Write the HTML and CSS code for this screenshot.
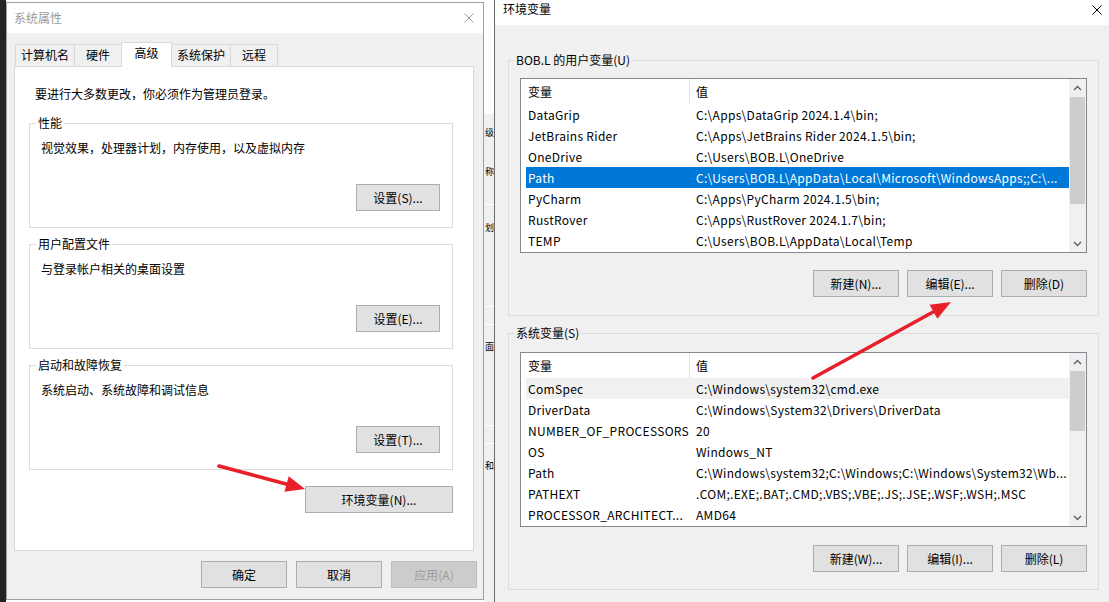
FILE: index.html
```html
<!DOCTYPE html>
<html lang="zh-CN">

<head>
    <meta charset="UTF-8">
    <meta name="viewport" content="width=device-width, initial-scale=1.0">
    <title>环境变量</title>
    <link rel="stylesheet" href="styles.css">
</head>

<body>

    <div class="desk-edge"></div>

    <!-- 系统属性 窗口 -->
    <div class="backdrop">
        <div class="window sysprop">
            <div class="titlebar">
                <span>系统属性</span>
                <svg class="close" width="10" height="10" viewBox="0 0 10 10">
                    <path d="M0.5 0.5 L9.5 9.5 M9.5 0.5 L0.5 9.5" />
                </svg>
            </div>
            <div class="content">
                <div class="tabs">
                    <div class="tab">计算机名</div>
                    <div class="tab">硬件</div>
                    <div class="tab active">高级</div>
                    <div class="tab">系统保护</div>
                    <div class="tab">远程</div>
                </div>
                <div class="panel">
                    <p class="notice">要进行大多数更改，你必须作为管理员登录。</p>

                    <fieldset class="group">
                        <legend>性能</legend>
                        <p>视觉效果，处理器计划，内存使用，以及虚拟内存</p>
                        <div class="btn-row">
                            <button class="btn btn-set">设置(S)...</button>
                        </div>
                    </fieldset>

                    <fieldset class="group">
                        <legend>用户配置文件</legend>
                        <p>与登录帐户相关的桌面设置</p>
                        <div class="btn-row">
                            <button class="btn btn-set">设置(E)...</button>
                        </div>
                    </fieldset>

                    <fieldset class="group">
                        <legend>启动和故障恢复</legend>
                        <p>系统启动、系统故障和调试信息</p>
                        <div class="btn-row">
                            <button class="btn btn-set">设置(T)...</button>
                        </div>
                    </fieldset>

                    <div class="btn-row env-row">
                        <button class="btn btn-env">环境变量(N)...</button>
                    </div>
                </div>
                <div class="dialog-buttons">
                    <button class="btn">确定</button>
                    <button class="btn">取消</button>
                    <button class="btn" disabled>应用(A)</button>
                </div>
            </div>
        </div>
    </div>

    <!-- 后面窗口露出的一条 -->
    <div class="behind">
        <div class="behind-top"></div>
        <div class="peek peek-1">级</div>
        <div class="peek peek-2">称</div>
        <div class="rule rule-1"></div>
        <div class="peek peek-3">划</div>
        <div class="rule rule-2"></div>
        <div class="rule rule-3"></div>
        <div class="peek peek-4">面</div>
        <div class="rule rule-2"></div>
        <div class="rule rule-3"></div>
        <div class="peek peek-5">和</div>
    </div>

    <!-- 环境变量 窗口 -->
    <div class="window envvars">
        <div class="titlebar">
            <span>环境变量</span>
            <svg class="close" width="10" height="10" viewBox="0 0 10 10">
                <path d="M0.5 0.5 L9.5 9.5 M9.5 0.5 L0.5 9.5" />
            </svg>
        </div>
        <div class="env-body">
            <fieldset class="env-group user-group">
                <legend>BOB.L 的用户变量(U)</legend>
                <div class="listview">
                    <div class="list-main">
                        <div class="list-head">
                            <div class="col-name">变量</div>
                            <div class="col-value">值</div>
                        </div>
                        <div class="row"><span>DataGrip</span><span>C:\Apps\DataGrip 2024.1.4\bin;</span></div>
                        <div class="row"><span>JetBrains Rider</span><span>C:\Apps\JetBrains Rider 2024.1.5\bin;</span></div>
                        <div class="row"><span>OneDrive</span><span>C:\Users\BOB.L\OneDrive</span></div>
                        <div class="row selected"><span>Path</span><span>C:\Users\BOB.L\AppData\Local\Microsoft\WindowsApps;;C:\...</span></div>
                        <div class="row"><span>PyCharm</span><span>C:\Apps\PyCharm 2024.1.5\bin;</span></div>
                        <div class="row"><span>RustRover</span><span>C:\Apps\RustRover 2024.1.7\bin;</span></div>
                        <div class="row"><span>TEMP</span><span>C:\Users\BOB.L\AppData\Local\Temp</span></div>
                    </div>
                    <div class="vscroll">
                        <div class="arrow">
                            <svg width="9" height="6" viewBox="0 0 9 6"><polyline points="1,5 4.5,1.5 8,5" /></svg>
                        </div>
                        <div class="track"><div class="thumb thumb-user"></div></div>
                        <div class="arrow">
                            <svg width="9" height="6" viewBox="0 0 9 6"><polyline points="1,1 4.5,4.5 8,1" /></svg>
                        </div>
                    </div>
                </div>
                <div class="btn-row list-buttons">
                    <button class="btn btn-list">新建(N)...</button>
                    <button class="btn btn-list">编辑(E)...</button>
                    <button class="btn btn-list">删除(D)</button>
                </div>
            </fieldset>

            <fieldset class="env-group system-group">
                <legend>系统变量(S)</legend>
                <div class="listview">
                    <div class="list-main">
                        <div class="list-head">
                            <div class="col-name">变量</div>
                            <div class="col-value">值</div>
                        </div>
                        <div class="row hover"><span>ComSpec</span><span>C:\Windows\system32\cmd.exe</span></div>
                        <div class="row"><span>DriverData</span><span>C:\Windows\System32\Drivers\DriverData</span></div>
                        <div class="row"><span>NUMBER_OF_PROCESSORS</span><span>20</span></div>
                        <div class="row"><span>OS</span><span>Windows_NT</span></div>
                        <div class="row"><span>Path</span><span>C:\Windows\system32;C:\Windows;C:\Windows\System32\Wb...</span></div>
                        <div class="row"><span>PATHEXT</span><span>.COM;.EXE;.BAT;.CMD;.VBS;.VBE;.JS;.JSE;.WSF;.WSH;.MSC</span></div>
                        <div class="row"><span>PROCESSOR_ARCHITECT...</span><span>AMD64</span></div>
                    </div>
                    <div class="vscroll">
                        <div class="arrow">
                            <svg width="9" height="6" viewBox="0 0 9 6"><polyline points="1,5 4.5,1.5 8,5" /></svg>
                        </div>
                        <div class="track"><div class="thumb thumb-system"></div></div>
                        <div class="arrow">
                            <svg width="9" height="6" viewBox="0 0 9 6"><polyline points="1,1 4.5,4.5 8,1" /></svg>
                        </div>
                    </div>
                </div>
                <div class="btn-row list-buttons">
                    <button class="btn btn-list">新建(W)...</button>
                    <button class="btn btn-list">编辑(I)...</button>
                    <button class="btn btn-list">删除(L)</button>
                </div>
            </fieldset>
        </div>
    </div>

    <!-- 红色标注箭头 -->
    <svg class="marks" width="1109" height="602" viewBox="0 0 1109 602">
        <line x1="219" y1="466" x2="288" y2="484.5" />
        <polygon points="305,489 284.5,491.8 288.7,476.3" />
        <line x1="813" y1="378" x2="934" y2="311.5" />
        <polygon points="951,302 937.4,318.7 929.6,304.7" />
    </svg>

</body>

</html>
```

FILE: styles.css
```css
/* 基本设置 */
* {
    box-sizing: border-box;
}

body {
    margin: 0;
    width: 1109px;
    height: 602px;
    overflow: hidden;
    position: relative;
    display: flex;
    background-color: #1e1e1e;
    font-family: "Noto Sans CJK SC", sans-serif;
    font-size: 12px;
    line-height: 16px;
    color: #000;
}

p {
    margin: 0;
}

.desk-edge {
    width: 6px;
    flex-shrink: 0;
    background-color: #242424;
}

.backdrop {
    width: 478px;
    flex-shrink: 0;
    padding-top: 2px;
    background-color: #fff;
}

/* 窗口 */
.window {
    background-color: #f0f0f0;
    border: 1px solid #a0a0a0;
}

.titlebar {
    display: flex;
    justify-content: space-between;
    background-color: #fff;
}

.close path {
    fill: none;
    stroke: #000;
    stroke-width: 1;
}

.sysprop {
    height: 598px;
}

.sysprop .titlebar {
    height: 30px;
    align-items: center;
    padding: 0 9px 0 7px;
    color: #9a9a9a;
}

.sysprop .close path {
    stroke: #9a9a9a;
}

.sysprop .content {
    padding: 9px 6px 0 7px;
}

/* 标签页 */
.tabs {
    display: flex;
    align-items: flex-end;
    height: 24px;
    padding-left: 1px;
}

.tab {
    height: 22px;
    min-width: 48px;
    padding: 0 5px;
    margin-right: -1px;
    border: 1px solid #d9d9d9;
    border-bottom: none;
    background-color: #f0f0f0;
    text-align: center;
    line-height: 20px;
}

.tab.active {
    height: 25px;
    min-width: 51px;
    margin-bottom: -1px;
    position: relative;
    z-index: 1;
    background-color: #fff;
    line-height: 20px;
}

.panel {
    margin-right: 3px;
    padding: 19px 20px 37px 14px;
    background-color: #fff;
    border: 1px solid #d9d9d9;
}

.notice {
    margin-left: 6px;
    margin-bottom: 13px;
}

/* 分组框 */
.group {
    margin: 0 0 8px 0;
    padding: 9px 12px 16px 11px;
    min-width: 0;
    border: 1px solid #dcdcdc;
}

.group legend,
.env-group legend {
    margin-left: -5px;
    padding: 0 2px;
    line-height: 16px;
}

.btn-row {
    display: flex;
    justify-content: flex-end;
}

.group .btn-row {
    margin-top: 28px;
}

.env-row {
    margin-top: 16px;
}

/* 按钮 */
.btn {
    width: 86px;
    height: 27px;
    padding: 0;
    border: 1px solid #adadad;
    background-color: #e1e1e1;
    font-family: inherit;
    font-size: 12px;
    color: #000;
}

.btn:disabled {
    background-color: #cccccc;
    border-color: #bfbfbf;
    color: #9c9c9c;
}

.btn-set {
    width: 84px;
}

.btn-env {
    width: 148px;
}

.dialog-buttons {
    display: flex;
    justify-content: flex-end;
    gap: 9px;
    margin-top: 10px;
}

/* 后面窗口 */
.behind {
    width: 10px;
    flex-shrink: 0;
    overflow: hidden;
    background-color: #f0f0f0;
}

.behind-top {
    height: 114px;
    background-color: #fff;
}

.peek {
    font-size: 9px;
    line-height: 16px;
    padding-left: 1px;
    white-space: nowrap;
}

.peek-1 { margin-top: 11px; }
.peek-2 { margin-top: 23px; }
.peek-3 { margin-top: 15px; }
.peek-4 { margin-top: 14px; }
.peek-5 { margin-top: 14px; }

.rule {
    height: 1px;
    background-color: #fff;
}

.rule-1 { margin-top: 24px; }
.rule-2 { margin-top: 70px; }
.rule-3 { margin-top: 17px; }

/* 环境变量 窗口 */
.envvars {
    width: 615px;
    height: 602px;
    flex-shrink: 0;
    border: none;
    border-left: 1px solid #6e6e6e;
}

.envvars .titlebar {
    height: 25px;
    padding: 1px 7px 0 8px;
}

.envvars .close {
    margin-top: 4px;
}

.env-body {
    padding: 27px 10px 0 13px;
}

.env-group {
    margin: 0;
    min-width: 0;
    border: 1px solid #dcdcdc;
}

.env-group legend {
    margin-left: -6px;
}

.user-group {
    padding: 10px 11px 18px 11px;
}

.system-group {
    margin-top: 9px;
    padding: 11px 11px 17px 11px;
}

.list-buttons {
    gap: 8px;
    margin-top: 17px;
}

.system-group .list-buttons {
    margin-top: 18px;
}

/* 列表 */
.listview {
    display: flex;
    height: 175px;
    border: 1px solid #828790;
    background-color: #fff;
}

.list-main {
    flex: 1;
    min-width: 0;
}

.list-head {
    display: flex;
    height: 25px;
    line-height: 25px;
}

.col-name {
    width: 169px;
    padding-left: 7px;
    border-right: 1px solid #e5e5e5;
}

.col-value {
    padding-left: 6px;
}

.row {
    display: grid;
    grid-template-columns: 170px 1fr;
    height: 21px;
    margin-left: 5px;
    line-height: 21px;
    letter-spacing: 0.3px;
    white-space: nowrap;
    overflow: hidden;
}

.row span:first-child {
    padding-left: 2px;
}

.row.selected {
    background-color: #0078d7;
    color: #fff;
}

.row.hover {
    background-color: #f0f0f0;
}

/* 滚动条 */
.vscroll {
    width: 17px;
    display: flex;
    flex-direction: column;
    background-color: #f0f0f0;
}

.arrow {
    height: 17px;
    display: flex;
    align-items: center;
    justify-content: center;
}

.arrow polyline {
    fill: none;
    stroke: #606060;
    stroke-width: 1.4;
}

.track {
    flex: 1;
}

.thumb {
    margin: 1px 1px 0 1px;
    background-color: #cdcdcd;
}

.thumb-user {
    height: 107px;
}

.thumb-system {
    height: 60px;
}

/* 红色箭头 */
.marks {
    position: absolute;
    top: 0;
    left: 0;
    pointer-events: none;
}

.marks line {
    stroke: #e8202a;
    stroke-width: 3.6;
    stroke-linecap: round;
}

.marks polygon {
    fill: #e8202a;
}
```
